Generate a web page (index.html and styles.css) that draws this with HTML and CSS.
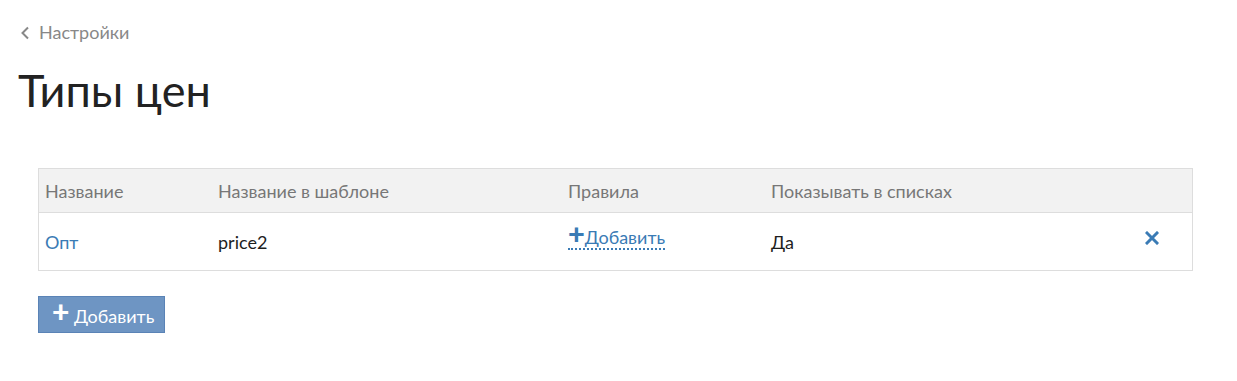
FILE: index.html
```html
<!DOCTYPE html>
<html lang="ru">
<head>
<meta charset="UTF-8">
<meta name="viewport" content="width=device-width, initial-scale=1.0">
<title>Типы цен</title>
<link rel="stylesheet" href="styles.css">
</head>
<body>
<div class="page">
    <a class="back" href="#">
        <svg class="back-icon" width="10" height="14" viewBox="0 0 10 14"><path d="M8 1.5 L2.5 7 L8 12.5" fill="none" stroke="#888" stroke-width="2"/></svg>Настройки
    </a>
    <h1>Типы цен</h1>

    <div class="content">
        <table class="prices">
            <thead>
                <tr>
                    <th class="col-name">Название</th>
                    <th class="col-tpl">Название в шаблоне</th>
                    <th class="col-rules">Правила</th>
                    <th class="col-show">Показывать в списках</th>
                    <th class="col-del"></th>
                </tr>
            </thead>
            <tbody>
                <tr>
                    <td><a href="#" class="link">Опт</a></td>
                    <td>price2</td>
                    <td><a href="#" class="dotted"><span class="plus">+</span>Добавить</a></td>
                    <td>Да</td>
                    <td class="del">
                        <svg width="14" height="14" viewBox="0 0 14 14"><path d="M2 2 L12 12 M12 2 L2 12" stroke="#3a7bb5" stroke-width="3" stroke-linecap="square"/></svg>
                    </td>
                </tr>
            </tbody>
        </table>

        <button class="btn-add"><span class="btn-plus">+</span> Добавить</button>
    </div>
</div>
</body>
</html>
```

FILE: styles.css
```css
/* Price types settings page */
body {
    margin: 0;
    font-family: Lato, "Open Sans", sans-serif;
    color: #222;
    background: #fff;
}
.page {
    padding: 20px 18px;
}
.back {
    display: inline-flex;
    align-items: center;
    gap: 9px;
    margin-left: 2px;
    font-size: 18px;
    color: #888;
    text-decoration: none;
    line-height: 24px;
}
.back-icon {
    margin-top: 1px;
}
h1 {
    margin: 16px 0 0;
    font-size: 45px;
    font-weight: 400;
    line-height: 60px;
    color: #222;
}
.content {
    padding: 48px 26px 0 20px;
}
.prices {
    width: 100%;
    border-collapse: collapse;
    border: 1px solid #ddd;
    font-size: 18px;
}
.prices th {
    background: #f2f2f2;
    color: #777;
    font-weight: 400;
    text-align: left;
    height: 43px;
    padding: 0 6px;
    border-bottom: 1px solid #ddd;
}
.prices td {
    height: 57px;
    padding: 0 6px;
    vertical-align: middle;
    color: #1e1e1e;
}
.col-name { width: 161px; }
.col-tpl { width: 338px; }
.col-rules { width: 191px; }
.col-show { width: 362px; }
.link {
    color: #3a7bb5;
    text-decoration: none;
}
.dotted {
    display: inline-block;
    margin-bottom: 8px;
    color: #3a7bb5;
    text-decoration: none;
    border-bottom: 2px dotted #3a7bb5;
    line-height: 22px;
}
.plus {
    font-weight: 900;
    font-size: 29px;
    line-height: 16px;
}
.del svg {
    display: block;
    margin-top: -7px;
}
.btn-add {
    margin-top: 25px;
    height: 37px;
    padding: 0 10px 0 13px;
    background: #6e95c3;
    border: 1px solid #5a83b6;
    color: #fff;
    font-family: Lato, "Open Sans", sans-serif;
    font-size: 18px;
    cursor: pointer;
}
.btn-plus {
    font-weight: 900;
    font-size: 30px;
    line-height: 16px;
}
```
